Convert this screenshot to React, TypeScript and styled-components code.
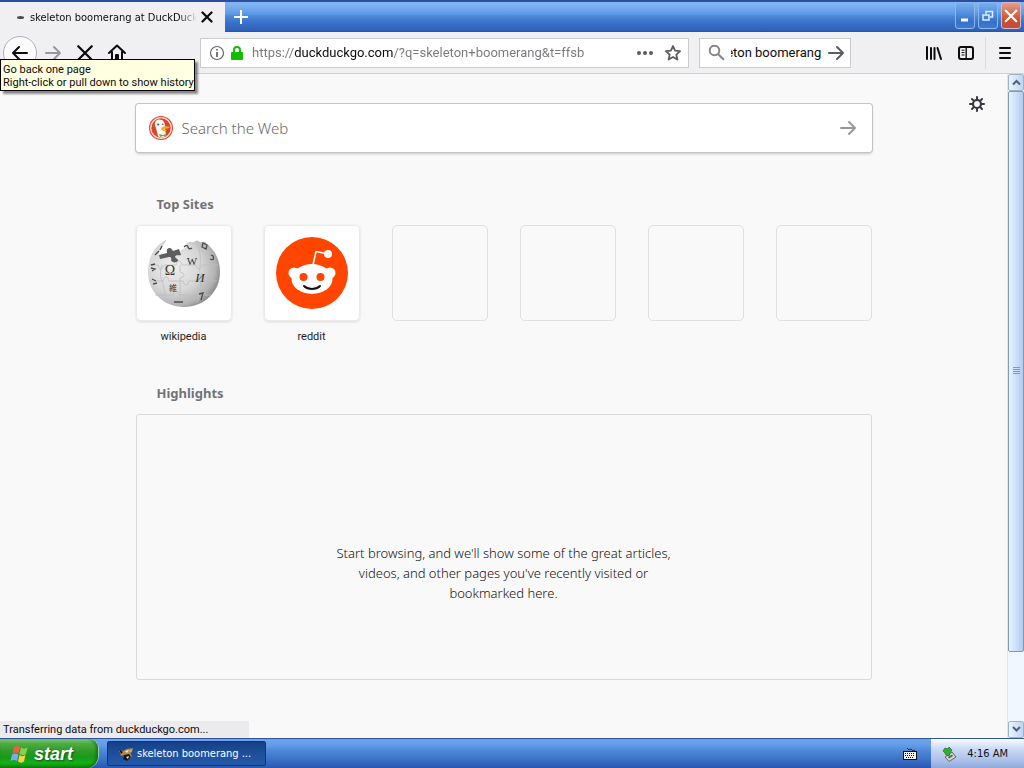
import React, { useEffect, useRef } from "react";
import styled, { createGlobalStyle, css } from "styled-components";

const uiFont = `"DejaVu Sans Condensed", "DejaVu Sans", sans-serif`;
const labelFont = `Roboto, "Liberation Sans", sans-serif`;
const pageFont = `"Noto Sans", "Open Sans", sans-serif`;

const GlobalStyle = createGlobalStyle`
  *, *::before, *::after { box-sizing: border-box; }
  body { margin: 0; background: #f9f9fa; }
  button, input { font: inherit; margin: 0; }
  button { padding: 0; border: 0; background: none; color: inherit; }
  svg { display: block; flex: none; }
`;

const Desktop = styled.div`
  display: flex;
  flex-direction: column;
  min-height: 100vh;
  font-family: ${uiFont};
  font-size: 11px;
  color: #0c0c0d;
`;

/* Title bar */
const TitleBar = styled.header`
  display: flex;
  height: 32px;
  border-top: 2px solid #2d4e9f;
  background: linear-gradient(#85b6f3 0, #7cb0f2 4px, #5c9ae6 12px, #4b8ad9 14px, #3a74ca 20px, #2f62ba 28px, #2b50ac 30px);
`;

const Tab = styled.div`
  display: flex;
  align-items: center;
  width: 225px;
  padding: 0 12px 0 17px;
  background: #f0eff2;
`;

const TabDot = styled.span`
  width: 7px;
  height: 3px;
  margin-right: 6px;
  border-radius: 50%;
  background: #4a4a50;
`;

const TabTitle = styled.span`
  flex: 1;
  overflow: hidden;
  white-space: nowrap;
  mask-image: linear-gradient(to left, transparent, #000 18px);
`;

const TabClose = styled.button`
  margin-left: 4px;
`;

const NewTab = styled.button`
  display: grid;
  place-items: center;
  width: 32px;
`;

const WindowButtons = styled.div`
  display: flex;
  gap: 3px;
  margin-left: auto;
  padding: 0 3px 2px 0;
`;

const WindowButton = styled.button<{ $close?: boolean }>`
  display: grid;
  place-items: center;
  width: 20px;
  height: 27px;
  border: 1px solid ${(p) => (p.$close ? "#d9b9c8" : "#8bb8ef")};
  border-radius: 3px;
  background: ${(p) =>
    p.$close
      ? "linear-gradient(#e0a092, #dc6a4c 40%, #cf4a2a 75%, #b8504f)"
      : "linear-gradient(#79aff0, #5590df 40%, #3670c8 75%, #3f7bd2)"};
`;

/* Toolbar */
const Toolbar = styled.nav`
  display: flex;
  align-items: center;
  height: 42px;
  padding-right: 3px;
  border-bottom: 1px solid #d2d2d4;
  background: #f0eff2;
`;

const NavButtons = styled.div`
  display: flex;
  position: relative;
  align-items: center;
  width: 200px;
  padding-left: 3px;
`;

const ToolButton = styled.button<{ $round?: boolean }>`
  display: grid;
  place-items: center;
  width: 32px;
  height: 32px;
  ${(p) =>
    p.$round &&
    css`
      width: 34px;
      height: 34px;
      border: 1px solid #b1b1b5;
      border-radius: 50%;
      background: #fbfbfb;
    `}
`;

const Tooltip = styled.div`
  position: absolute;
  z-index: 2;
  top: 23px;
  left: 0;
  padding: 3px 0 1px 2px;
  border: 1px solid #000;
  background: #ffffe1;
  box-shadow: 3px 3px 2px rgba(0, 0, 0, 0.45);
  font-family: ${labelFont};
  line-height: 13px;
  white-space: nowrap;
`;

const Field = styled.div<{ $grow?: boolean }>`
  display: flex;
  align-items: center;
  flex: ${(p) => (p.$grow ? "1 1 0" : "0 0 152px")};
  min-width: 0;
  height: 30px;
  padding: ${(p) => (p.$grow ? "0 6px 0 8px" : "0 5px 0 8px")};
  border: 1px solid #cbcbce;
  background: #fff;
  font-family: ${labelFont};
  font-size: 13px;

  & + & { margin-left: 10px; }
`;

const FieldInput = styled.input`
  flex: 1;
  min-width: 0;
  padding: 0;
  border: 0;
  outline: 0;
  background: transparent;
  color: #0c0c0d;
`;

/* The host name is darker than the rest of the address. */
const AddressInput = styled(FieldInput)`
  margin-left: 8px;
  background-image: linear-gradient(to right, #77777c 42px, #0c0c0d 42px, #0c0c0d 141px, #77777c 141px);
  background-clip: text;
  -webkit-text-fill-color: transparent;
`;

const QueryInput = styled(FieldInput)`
  margin: 0 6px;
`;

const FieldIcons = styled.div<{ $gap: number }>`
  display: flex;
  align-items: center;
  gap: ${(p) => p.$gap}px;
`;

const ToolGroup = styled.div`
  display: flex;
  align-items: center;
  margin-left: 67px;
`;

const MenuSlot = styled.div`
  margin-left: 3px;
  padding-left: 3px;
  border-left: 1px solid #dcdce0;
`;

/* Page */
const Viewport = styled.div`
  display: flex;
  position: relative;
  flex: 1;
  background: #f9f9fa;
`;

const Page = styled.main`
  position: relative;
  flex: 1;
  padding: 30px 24px 58px;
  font-family: ${pageFont};
`;

const Column = styled.div`
  max-width: 736px;
  margin: 0 auto;
`;

const SettingsButton = styled.button`
  position: absolute;
  top: 22px;
  right: 22px;
`;

const SearchBox = styled.form`
  display: flex;
  align-items: center;
  height: 48px;
  padding: 0 15px 0 12px;
  border-radius: 3px;
  background: #fff;
  box-shadow: 0 0 0 1px #c4c4c6, 0 2px 3px rgba(0, 0, 0, 0.2);
`;

const SearchInput = styled(FieldInput)`
  margin-left: 8px;
  font-size: 15px;
  font-weight: 300;
  &::placeholder { color: #68686d; opacity: 1; }
`;

const Section = styled.section<{ $top: number }>`
  margin-top: ${(p) => p.$top}px;
`;

const SectionTitle = styled.h2`
  margin: 0 0 11px;
  padding-left: 21px;
  font-size: 13px;
  line-height: 20px;
  color: #737377;
`;

const Sites = styled.ul`
  display: grid;
  grid-template-columns: repeat(6, 96px);
  justify-content: space-between;
  margin: 0;
  padding: 0;
  list-style: none;
`;

const SiteLink = styled.a`
  display: block;
  color: #1c1c1f;
  text-decoration: none;
  font-family: ${labelFont};
  font-size: 11px;
  line-height: 32px;
  text-align: center;
`;

const Tile = styled.div<{ $empty?: boolean }>`
  display: grid;
  place-items: center;
  height: 96px;
  border: 1px solid ${(p) => (p.$empty ? "#dfdfe1" : "#ebebed")};
  border-radius: 5px;
  background: ${(p) => (p.$empty ? "transparent" : "#fff")};
  box-shadow: ${(p) => (p.$empty ? "none" : "0 1px 3px rgba(12, 12, 13, 0.12)")};
`;

const EmptyCard = styled.div`
  display: grid;
  place-items: center;
  height: 266px;
  padding-top: 52px;
  border: 1px solid #dadadc;
  border-radius: 3px;
`;

const EmptyText = styled.p`
  width: 346px;
  margin: 0;
  color: #121214;
  font-size: 13px;
  font-weight: 300;
  line-height: 20px;
  text-align: center;
`;

const StatusPanel = styled.div`
  position: absolute;
  bottom: 0;
  left: 0;
  width: 249px;
  padding-left: 3px;
  background: #ebebee;
  font-family: ${labelFont};
  line-height: 17px;
`;

/* Scroll bar */
const ScrollBar = styled.div`
  display: flex;
  flex-direction: column;
  width: 17px;
  border-left: 1px solid #dce9f5;
  background: #f0f7fe;
`;

const ScrollButton = styled.button`
  display: grid;
  place-items: center;
  height: 17px;
  border: 1px solid #9fb3c8;
  border-radius: 2px;
  background: linear-gradient(90deg, #e9f4ff, #bfd5f0);
`;

const ScrollTrack = styled.div`
  display: flex;
  flex-direction: column;
  flex: 1;
`;

const ScrollThumb = styled.div`
  display: grid;
  place-items: center;
  flex: 0 0 89%;
  border: 1px solid #8299ae;
  border-radius: 2px;
  background: linear-gradient(90deg, #e7f3ff, #cbe0fb 50%, #b4cae9);
`;

/* Taskbar */
const TaskBar = styled.footer`
  display: flex;
  height: 30px;
  border-top: 1px solid #31549d;
  background: linear-gradient(#6da4ee 0, #639ce8 6px, #4c88d8 12px, #3c73c9 20px, #2b56b0 29px);
  color: #fff;
`;

const StartButton = styled.button`
  display: flex;
  align-items: center;
  gap: 5px;
  width: 98px;
  padding-left: 10px;
  border-radius: 0 9px 12px 0;
  background: linear-gradient(#8fd483 0, #4fae45 4px, #2f9a2a 12px, #189a17 18px, #14b019 24px, #128112);
  box-shadow: inset -2px 0 3px rgba(8, 70, 10, 0.5), 1px 0 0 #93cfa8;
  font: italic bold 18px/28px "Liberation Sans", sans-serif;
  text-shadow: 1px 1px 2px #17510f;
`;

const TaskButton = styled.button`
  display: flex;
  align-items: center;
  gap: 3px;
  align-self: center;
  width: 159px;
  height: 25px;
  margin-left: 9px;
  padding-left: 10px;
  border: 1px solid #183370;
  border-radius: 2px;
  background: linear-gradient(#173f87, #1d4c98 40%, #2359a8);
`;

const TrayKeyboard = styled.button`
  margin-left: auto;
  padding: 0 14px;
`;

const Tray = styled.div`
  display: flex;
  align-items: center;
  justify-content: space-between;
  width: 93px;
  padding: 0 16px 0 10px;
  background: linear-gradient(#fafcff 0, #cddcf6 9px, #a9bfe8 22px, #8fa9dc 29px);
  color: #101018;
`;

const Cross = ({ size, width = 2, color = "#0c0c0d" }: { size: number; width?: number; color?: string }) => (
  <svg width={size} height={size} viewBox="0 0 16 16" stroke={color} strokeWidth={width} strokeLinecap="round">
    <path d="M2 2l12 12M14 2L2 14" />
  </svg>
);

const Arrow = ({ color, left, size = 18 }: { color: string; left?: boolean; size?: number }) => (
  <svg width={size} height={size} viewBox="0 0 18 18" fill="none" stroke={color} strokeWidth="2" strokeLinecap="round" strokeLinejoin="round">
    <path d={left ? "M16 9H2M8 3L2 9l6 6" : "M2 9h14M10 3l6 6-6 6"} />
  </svg>
);

const HomeIcon = () => (
  <svg width="18" height="18" viewBox="0 0 18 18" fill="none" stroke="#0c0c0d" strokeWidth="2" strokeLinecap="round" strokeLinejoin="round">
    <path d="M1 9l8-7.5L17 9M4 8v8h10V8" />
    <path d="M8 11h2v5H8z" fill="#0c0c0d" />
  </svg>
);

const InfoIcon = () => (
  <svg width="16" height="16" viewBox="0 0 16 16" fill="none" stroke="#67676c">
    <circle cx="8" cy="8" r="6.5" strokeWidth="1.2" />
    <path d="M8 7v5M8 4v1.6" strokeWidth="1.8" />
  </svg>
);

const LockIcon = () => (
  <svg width="14" height="16" viewBox="0 0 14 16">
    <path d="M4 8V5a3 3 0 0 1 6 0v3" fill="none" stroke="#12bc00" strokeWidth="2" />
    <rect x="1" y="7" width="12" height="8" rx="1" fill="#12bc00" />
  </svg>
);

const StarIcon = () => (
  <svg width="18" height="18" viewBox="0 0 18 18" fill="none" stroke="#5b5b60" strokeWidth="1.8" strokeLinejoin="round">
    <path d="M9 2l2.1 4.7 5 .5-3.8 3.4 1.1 5L9 13l-4.4 2.6 1.1-5L1.9 7.2l5-.5z" />
  </svg>
);

const DotsIcon = () => (
  <svg width="18" height="6" viewBox="0 0 18 6" fill="#5b5b60">
    <circle cx="3" cy="3" r="2" /><circle cx="9" cy="3" r="2" /><circle cx="15" cy="3" r="2" />
  </svg>
);

const MagnifierIcon = () => (
  <svg width="17" height="17" viewBox="0 0 17 17" fill="none" stroke="#85858a" strokeWidth="2" strokeLinecap="round">
    <circle cx="6.5" cy="6.5" r="4.8" /><path d="M10.3 10.3l5 5" />
  </svg>
);

const LibraryIcon = () => (
  <svg width="18" height="16" viewBox="0 0 18 16" fill="none" stroke="#0c0c0d" strokeWidth="2" strokeLinecap="round">
    <path d="M2 2v12M6 3v11M9.500 3v11M12.500 3L16 14" />
  </svg>
);

const SidebarIcon = () => (
  <svg width="16" height="16" viewBox="0 0 16 16" fill="none" stroke="#0c0c0d">
    <rect x="1" y="2" width="14" height="12" rx="2" strokeWidth="2" />
    <path d="M8.2 2v12" strokeWidth="1.4" /><path d="M3.5 5.2h3M3.5 7.6h3M3.5 10h3" />
  </svg>
);

const MenuIcon = () => (
  <svg width="14" height="14" viewBox="0 0 14 14" stroke="#0c0c0d" strokeWidth="2" strokeLinecap="round">
    <path d="M2 2h10M2 7h10M2 12h10" />
  </svg>
);

const GearIcon = () => (
  <svg width="16" height="16" viewBox="0 0 16 16" fill="none" stroke="#38383d" strokeLinecap="round">
    <circle cx="8" cy="8" r="4" strokeWidth="2.200" />
    <path strokeWidth="2" d="M8 1v2M8 13v2M1 8h2M13 8h2M3 3l1.600 1.600M11.400 11.400L13 13M3 13l1.600-1.600M11.400 4.600L13 3" />
  </svg>
);

const DuckIcon = () => (
  <svg width="26" height="26" viewBox="0 0 26 26">
    <circle cx="13" cy="13" r="12" fill="#d8442c" />
    <circle cx="13" cy="13" r="10.3" fill="none" stroke="#fbd8cb" strokeWidth="1.3" />
    <path d="M8 6c2-2 6-2 8 1 1 2 1 4 1 6l1 8c-3 2-6 2-8 0L8 13c-1-2-2-5 0-7z" fill="#fbfaf2" />
    <path d="M14 12c3-1 6-1 8 0-1 1-3 2-7 2 2 1 3 1 4 1-2 2-5 1-6-1z" fill="#f9a828" />
    <path d="M11 19l4 1 3-1v3l-3-1-3 1z" fill="#6cae4c" />
    <circle cx="10.200" cy="9.600" r="1" fill="#2d4f8e" /><circle cx="14.800" cy="9.200" r=".8" fill="#2d4f8e" />
  </svg>
);

const WikipediaLogo = () => (
  <svg width="76" height="76" viewBox="0 0 76 76" fontFamily="Liberation Serif, serif" fill="#343434">
    <defs>
      <radialGradient id="globe" cx=".36" cy=".4" r=".68">
        <stop offset="0" stopColor="#eeeeee" /><stop offset=".55" stopColor="#d6d6d6" /><stop offset=".85" stopColor="#b2b2b2" /><stop offset="1" stopColor="#858585" />
      </radialGradient>
    </defs>
    <path d="M20 5C8 11 2 23 2 37c0 20 16 35 36 35s36-15 36-35c0-12-5-22-14-29-2-3-3 0-6-1-2-2-4-2-6 0-3 1-5-1-7 1-1 2 1 4-2 5l-4 2c-1 4-5 2-8 3l-8 1-5 2c-3-3 1-7 3-10 1-3 4-4 3-6z" fill="url(#globe)" />
    <path d="M13 20l8-2c0-2-1-4 2-5 3 0 3 2 4 3l6-2 2 6c-2 1-5-1-6 2 1 2 3 1 3 4-2 2-6 2-7-1 1-2 0-3-2-3l-9 2z" fill="#5e5e5e" />
    <g fill="none" stroke="#bdbdbd" strokeWidth=".8">
      <path d="M4 30h8c1 0 0 4 3 4s2-4 3-4h12c1 0 0-4 3-4s2 4 3 4h14c1 0 0 4 3 4s2-4 3-4h16" />
      <path d="M3 46h14c1 0 0-4 3-4s2 4 3 4h14c1 0 0 4 3 4s2-4 3-4h14c1 0 0-4 3-4s2 4 3 4h8" />
      <path d="M9 60h18c1 0 0-4 3-4s2 4 3 4h14c1 0 0 4 3 4s2-4 3-4h12" />
      <path d="M16 30c-2 6-2 10 0 16s2 10 5 20M34 30v7c0 1 4 0 4 3s-4 2-4 3v25M52 10c2 7 3 13 2 22s2 9 1 14 0 12-4 22" />
    </g>
    <g textAnchor="middle">
      <text x="24" y="40" fontSize="14">Ω</text>
      <text x="46" y="30" fontSize="11">W</text>
      <text x="54" y="47" fontSize="13" fontStyle="italic">И</text>
      <text x="27" y="56" fontSize="8" fontFamily="Noto Sans CJK JP, sans-serif">維</text>
    </g>
    <g fill="none" stroke="#4c4c4c" strokeWidth="1.300">
      <path d="M38 12q3-3 4 0t4 1M57 8l4 2-1 4-4-2zM64 24q5 2 3-3l-2-1M53 59l4-1-2 7M5 30l4-1M5 33l4 1-3 2M6 44l4 2M7 49l4-1M28 67h9M9 20l4-4M16 11l-2 4" />
    </g>
  </svg>
);

const RedditLogo = () => (
  <svg width="72" height="72" viewBox="0 0 72 72">
    <circle cx="36" cy="36" r="36" fill="#ff4500" />
    <g fill="#fff">
      <circle cx="18" cy="36" r="5.500" /><circle cx="54" cy="36" r="5.500" />
      <ellipse cx="36" cy="42" rx="20.500" ry="15" /><circle cx="52" cy="17" r="4" />
      <path d="M37 28l3-13.500 12 2.500" fill="none" stroke="#fff" strokeWidth="1.600" strokeLinejoin="round" />
    </g>
    <circle cx="27.500" cy="40" r="4" fill="#ff4500" /><circle cx="44.500" cy="40" r="4" fill="#ff4500" />
    <path d="M28 49c4 4 12 4 16 0" fill="none" stroke="#111" strokeWidth="2" strokeLinecap="round" />
  </svg>
);

const Chevron = ({ down }: { down?: boolean }) => (
  <svg width="9" height="7" viewBox="0 0 9 7" fill="none" stroke="#4d6185" strokeWidth="2">
    <path d={down ? "M1 1l3.5 3.5L8 1" : "M1 5.5L4.5 2 8 5.5"} />
  </svg>
);

const WindowsFlag = () => (
  <svg width="19" height="18" viewBox="0 0 19 18">
    <path d="M4 2c2-1.500 4-1.500 6 0L8.500 8.500c-2-1.500-4-1.500-6 0z" fill="#f0603a" />
    <path d="M11 2.500c2 1.500 4 1.500 6.500 0L16 9c-2 1.500-4 1.500-6.500 0z" fill="#8bd04c" />
    <path d="M2 9.500c2-1.500 4-1.500 6.500 0L7 16c-2-1.500-4-1.500-6.500 0z" fill="#7ba9f5" />
    <path d="M9.500 10c2 1.500 4 1.500 6 0L14 16.500c-2 1.500-4 1.500-6 0z" fill="#fbd347" />
  </svg>
);

const CritterIcon = () => (
  <svg width="16" height="16" viewBox="0 0 16 16">
    <path d="M1 4l4 1 4-2 6-1-3 4 2 5-4 2-5-1 1-3-3 1z" fill="#b98849" />
    <path d="M1 3l4 3-2 2zM6 9l5-1 2 3-4 4-4-2z" fill="#17171b" />
    <path d="M7 5l4-1-2 3zM8 11l3-1-1 3z" fill="#f4e6c9" />
    <path d="M11 5l4-2-2 4z" fill="#eab04e" />
  </svg>
);

const KeyboardIcon = () => (
  <svg width="14" height="14" viewBox="0 0 14 14">
    <path d="M4 1l2 2 2-1 2 2 2-1" fill="none" stroke="#1d2b4d" />
    <rect x=".5" y="4.500" width="13" height="8" fill="#f1f1e9" stroke="#111" />
    <path d="M2 6.500h10M2 8.500h10M3 10.500h8" stroke="#111" strokeDasharray="1 1" />
  </svg>
);

const EjectDeviceIcon = () => (
  <svg width="16" height="16" viewBox="0 0 16 16">
    <path d="M4 11l7-5 4 5-7 4.500z" fill="#cfd3cf" stroke="#666c68" />
    <path d="M7 11l4-2.500 1 1.500-4 2.500z" fill="#59615c" />
    <path d="M2 5l2-3 3 1 1-2 3 3-2 3-1 3-3-1-1-2z" fill="#33ad2f" stroke="#187519" strokeWidth=".7" />
  </svg>
);

const sites = [
  { name: "wikipedia", href: "#wikipedia", logo: <WikipediaLogo /> },
  { name: "reddit", href: "#reddit", logo: <RedditLogo /> },
];

export default function App() {
  const searchRef = useRef<HTMLInputElement>(null);

  // Keep the end of a long query in view.
  useEffect(() => {
    const input = searchRef.current;
    if (input) input.scrollLeft = input.scrollWidth;
  }, []);

  return (
    <Desktop>
      <GlobalStyle />
      <TitleBar>
        <Tab>
          <TabDot />
          <TabTitle>skeleton boomerang at DuckDuckGo</TabTitle>
          <TabClose aria-label="Close tab"><Cross size={12} width={3} /></TabClose>
        </Tab>
        <NewTab aria-label="New tab">
          <svg width="14" height="14" viewBox="0 0 14 14" stroke="#fff" strokeWidth="2"><path d="M7 0v14M0 7h14" /></svg>
        </NewTab>
        <WindowButtons>
          <WindowButton aria-label="Minimize">
            <svg width="12" height="12" viewBox="0 0 12 12"><path d="M2 10h7" stroke="#fff" strokeWidth="3" /></svg>
          </WindowButton>
          <WindowButton aria-label="Restore">
            <svg width="12" height="12" viewBox="0 0 12 12" fill="none" stroke="#d8f1ff" strokeWidth="1.500">
              <path d="M1 5h6v5H1zM4 4V1.500h6.500V7H8" />
            </svg>
          </WindowButton>
          <WindowButton $close aria-label="Close"><Cross size={14} width={2.5} color="#fff" /></WindowButton>
        </WindowButtons>
      </TitleBar>

      <Toolbar>
        <NavButtons>
          <ToolButton $round aria-label="Back"><Arrow left color="#0c0c0d" /></ToolButton>
          <ToolButton aria-label="Forward"><Arrow color="#98989c" /></ToolButton>
          <ToolButton aria-label="Stop"><Cross size={18} /></ToolButton>
          <ToolButton aria-label="Home"><HomeIcon /></ToolButton>
          <Tooltip role="tooltip">
            Go back one page<br />Right-click or pull down to show history
          </Tooltip>
        </NavButtons>
        <Field $grow>
          <FieldIcons $gap={5}><InfoIcon /><LockIcon /></FieldIcons>
          <AddressInput aria-label="Address" defaultValue="https://duckduckgo.com/?q=skeleton+boomerang&t=ffsb" />
          <FieldIcons $gap={10}>
            <button aria-label="Page actions"><DotsIcon /></button>
            <button aria-label="Bookmark"><StarIcon /></button>
          </FieldIcons>
        </Field>
        <Field>
          <MagnifierIcon />
          <QueryInput ref={searchRef} aria-label="Search" defaultValue="skeleton boomerang" />
          <button aria-label="Go"><Arrow color="#5b5b60" /></button>
        </Field>
        <ToolGroup>
          <ToolButton aria-label="Library"><LibraryIcon /></ToolButton>
          <ToolButton aria-label="Sidebars"><SidebarIcon /></ToolButton>
          <MenuSlot><ToolButton aria-label="Menu"><MenuIcon /></ToolButton></MenuSlot>
        </ToolGroup>
      </Toolbar>

      <Viewport>
        <Page>
          <SettingsButton aria-label="Customize page"><GearIcon /></SettingsButton>
          <Column>
            <SearchBox onSubmit={(e) => e.preventDefault()}>
              <DuckIcon />
              <SearchInput aria-label="Search the Web" placeholder="Search the Web" />
              <button aria-label="Search"><Arrow color="#98989c" /></button>
            </SearchBox>
            <Section $top={42}>
              <SectionTitle>Top Sites</SectionTitle>
              <Sites>
                {sites.map((site) => (
                  <li key={site.name}>
                    <SiteLink href={site.href}><Tile>{site.logo}</Tile>{site.name}</SiteLink>
                  </li>
                ))}
                {[0, 1, 2, 3].map((slot) => <li key={slot}><Tile $empty /></li>)}
              </Sites>
            </Section>
            <Section $top={30}>
              <SectionTitle>Highlights</SectionTitle>
              <EmptyCard>
                <EmptyText>
                  Start browsing, and we'll show some of the great articles, videos, and other pages you've recently visited or bookmarked here.
                </EmptyText>
              </EmptyCard>
            </Section>
          </Column>
        </Page>
        <ScrollBar>
          <ScrollButton aria-label="Scroll up"><Chevron /></ScrollButton>
          <ScrollTrack>
            <ScrollThumb>
              <svg width="7" height="8" viewBox="0 0 7 8" stroke="#8299ae"><path d="M0 .5h7M0 2.500h7M0 4.500h7M0 6.500h7" /></svg>
            </ScrollThumb>
          </ScrollTrack>
          <ScrollButton aria-label="Scroll down"><Chevron down /></ScrollButton>
        </ScrollBar>
        <StatusPanel role="status">Transferring data from duckduckgo.com...</StatusPanel>
      </Viewport>

      <TaskBar>
        <StartButton><WindowsFlag />start</StartButton>
        <TaskButton><CritterIcon />skeleton boomerang ...</TaskButton>
        <TrayKeyboard aria-label="Keyboard layout"><KeyboardIcon /></TrayKeyboard>
        <Tray><EjectDeviceIcon /><time>4:16 AM</time></Tray>
      </TaskBar>
    </Desktop>
  );
}
